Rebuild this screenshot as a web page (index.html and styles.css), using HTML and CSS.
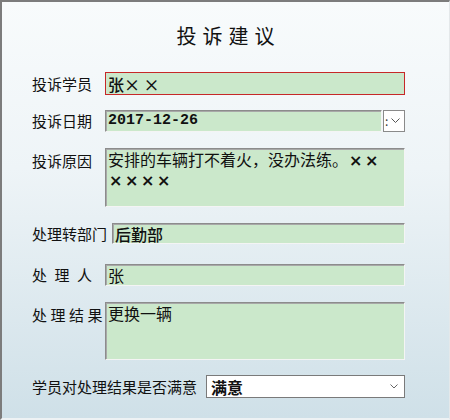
FILE: index.html
```html
<!DOCTYPE html>
<html lang="zh-CN">
<head>
  <meta charset="UTF-8" />
  <title>投诉建议</title>
  <link rel="stylesheet" href="styles.css">
</head>
<body>
  <div class="window">
    <h1 class="title">投诉建议</h1>

    <div class="rows">
      <div class="row">
        <span class="label">投诉学员</span>
        <div class="field focus h23">张× ×</div>
      </div>

      <div class="row">
        <span class="label">投诉日期</span>
        <div class="field date h22">2017-12-26</div>
        <div class="date-btn">
          <span class="dots">:</span>
          <svg width="9" height="6" viewBox="0 0 9 6"><polyline points="0.5,0.5 4.5,4.5 8.5,0.5" fill="none" stroke="#555" stroke-width="1"/></svg>
        </div>
      </div>

      <div class="row top gap1">
        <span class="label">投诉原因</span>
        <div class="field area h59">安排的车辆打不着火，没办法练。<b class="x">××</b><br><b class="x">××××</b></div>
      </div>

      <div class="row gap1">
        <span class="label wide">处理转部门</span>
        <div class="field bold h21">后勤部</div>
      </div>

      <div class="row gap5">
        <span class="label spaced">处理人</span>
        <div class="field h22">张</div>
      </div>

      <div class="row top gap1">
        <span class="label spaced-sm">处理结果</span>
        <div class="field area h58">更换一辆</div>
      </div>

      <div class="row">
        <span class="label wide long">学员对处理结果是否满意</span>
        <div class="select">
          <span>满意</span>
          <svg width="8" height="5" viewBox="0 0 8 5"><polyline points="0.5,0.5 4,4 7.5,0.5" fill="none" stroke="#666" stroke-width="1"/></svg>
        </div>
      </div>
    </div>
  </div>
</body>
</html>
```

FILE: styles.css
```css
* { box-sizing: border-box; }

body {
  margin: 0;
  font-family: "Noto Sans CJK SC", sans-serif;
  color: #111;
}

.window {
  width: 450px;
  height: 420px;
  border-top: 2px solid #7c7c7c;
  border-left: 2px solid #7c7c7c;
  border-right: 1px solid #e4e8ea;
  border-bottom: 2px solid #eef2f4;
  background: linear-gradient(to bottom, #f8fbfc 0%, #eef4f7 40%, #cfe0e8 100%);
  padding: 22px 44px 0 30px;
}

.title {
  margin: 0 0 24px;
  text-align: center;
  font-size: 20px;
  font-weight: normal;
  line-height: 24px;
  letter-spacing: 6px;
  padding-left: 20px;
}

.rows {
  display: flex;
  flex-direction: column;
  gap: 15px;
}
.gap1 { margin-top: 1px; }
.gap5 { margin-top: 5px; }

.row {
  display: flex;
  align-items: center;
}
.row.top { align-items: flex-start; }

.label {
  width: 73px;
  flex: none;
  font-size: 15px;
  line-height: 20px;
  white-space: nowrap;
}
.row.top .label { margin-top: 3px; }
.label.wide { width: auto; margin-right: 5px; }
.label.long { margin-right: 9px; }
.label.spaced { letter-spacing: 7.5px; }
.label.spaced-sm { letter-spacing: 3.5px; }

.field {
  flex: 1;
  background: #cbe8cb;
  border: 1px solid;
  border-color: #8c8c8c #f4f4f4 #f4f4f4 #8c8c8c;
  box-shadow: inset 1px 1px 0 #a8a8a8;
  padding: 0 2px;
  font-size: 16px;
  line-height: 20px;
  display: flex;
  align-items: center;
  white-space: nowrap;
}
.field.focus {
  border: 1px solid #c62828;
  box-shadow: none;
  font-weight: 500;
}
.field.date {
  font-family: "Liberation Mono", monospace;
  font-weight: bold;
  font-size: 15px;
}
.field.bold { font-weight: 500; }
.field.area {
  display: block;
  white-space: normal;
  line-height: 18px;
  padding-top: 1px;
}
.x {
  font-family: "DejaVu Sans", sans-serif;
  letter-spacing: 2.6px;
  padding-left: 1px;
}

.h21 { height: 21px; }
.h22 { height: 22px; }
.h23 { height: 23px; }
.h58 { height: 58px; }
.h59 { height: 59px; }

.date-btn {
  flex: none;
  width: 22px;
  height: 22px;
  margin-left: 1px;
  background: #fff;
  border: 1px solid #8a8a8a;
  display: flex;
  align-items: center;
  padding-left: 1px;
  gap: 3px;
}
.dots {
  font-size: 12px;
  line-height: 12px;
  color: #333;
}

.select {
  flex: 1;
  height: 23px;
  background: #fff;
  border: 1px solid #7a7a7a;
  display: flex;
  align-items: center;
  justify-content: space-between;
  padding: 0 6px 0 4px;
  font-size: 16px;
  font-weight: bold;
}
```
